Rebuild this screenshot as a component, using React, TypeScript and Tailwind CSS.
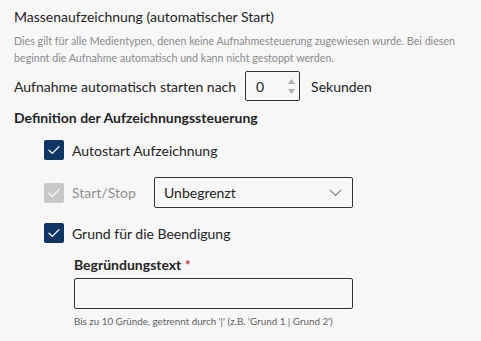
import React from "react";

function Check({ disabled }: { disabled?: boolean }) {
  return (
    <span
      className={
        "flex h-[20px] w-[20px] shrink-0 items-center justify-center rounded-[2px] " +
        (disabled ? "bg-[#c8c8c8]" : "bg-[#0f3562]")
      }
    >
      <svg width="12" height="10" viewBox="0 0 12 10" fill="none">
        <path d="M1 5.2 L4.3 8.4 L11 1.6" stroke="white" strokeWidth="1.3" strokeLinecap="round" strokeLinejoin="round" />
      </svg>
    </span>
  );
}

export default function App() {
  return (
    <div className="h-[341px] w-[481px] overflow-hidden bg-[#f7f7f7] px-[14px] pt-[7px] font-['Segoe_UI','Lato',sans-serif] text-[#242424]">
      <div className="text-[14px] leading-[20px]">Massenaufzeichnung (automatischer Start)</div>
      <p className="mt-[5px] text-[10.7px] leading-[17px] text-[#8a8a8a]">
        Dies gilt für alle Medientypen, denen keine Aufnahmesteuerung zugewiesen wurde. Bei diesen beginnt die Aufnahme automatisch und kann nicht gestoppt werden.
      </p>
      <div className="mt-[5px] flex items-center text-[14px]">
        <span>Aufnahme automatisch starten nach</span>
        <div className="ml-[9px] flex h-[30px] w-[55px] items-center justify-between rounded-[2px] border border-[#333] pl-[10px] pr-[4px]">
          <span>0</span>
          <div className="flex flex-col gap-[5px]">
            <svg width="7" height="5" viewBox="0 0 7 5"><path d="M3.5 0 L7 5 L0 5Z" fill="#b0b0b0" /></svg>
            <svg width="7" height="5" viewBox="0 0 7 5"><path d="M0 0 L7 0 L3.5 5Z" fill="#b0b0b0" /></svg>
          </div>
        </div>
        <span className="ml-[11px]">Sekunden</span>
      </div>
      <div className="mt-[7px] text-[14px] font-bold leading-[20px]">Definition der Aufzeichnungssteuerung</div>
      <div className="ml-[30px] mt-[12px] flex flex-col">
        <label className="flex h-[20px] items-center gap-[8px] text-[14px]">
          <Check />
          <span>Autostart Aufzeichnung</span>
        </label>
        <div className="mt-[17px] flex items-center">
          <label className="flex w-[110px] items-center gap-[8px] text-[14px] text-[#8f8f8f]">
            <Check disabled />
            <span>Start/Stop</span>
          </label>
          <div className="flex h-[31px] w-[199px] items-center justify-between rounded-[2px] border border-[#333] pl-[9px] pr-[10px] text-[14px]">
            <span>Unbegrenzt</span>
            <svg width="13" height="8" viewBox="0 0 13 8" fill="none">
              <path d="M0.8 0.8 L6.5 6.5 L12.2 0.8" stroke="#7a7a7a" strokeWidth="1.1" />
            </svg>
          </div>
        </div>
        <label className="mt-[15px] flex h-[20px] items-center gap-[8px] text-[14px]">
          <Check />
          <span>Grund für die Beendigung</span>
        </label>
        <div className="ml-[30px] mt-[12px]">
          <div className="text-[14px] font-bold leading-[20px]">
            Begründungstext <span className="text-[#c4314b]">*</span>
          </div>
          <div className="mt-[3px] h-[31px] w-[279px] rounded-[2px] border border-[#333] bg-[#f7f7f7]" />
          <div className="mt-[5px] text-[9.8px] leading-[14px] text-[#616161]">
            Bis zu 10 Gründe, getrennt durch '|' (z.B. 'Grund 1 | Grund 2')
          </div>
        </div>
      </div>
    </div>
  );
}
